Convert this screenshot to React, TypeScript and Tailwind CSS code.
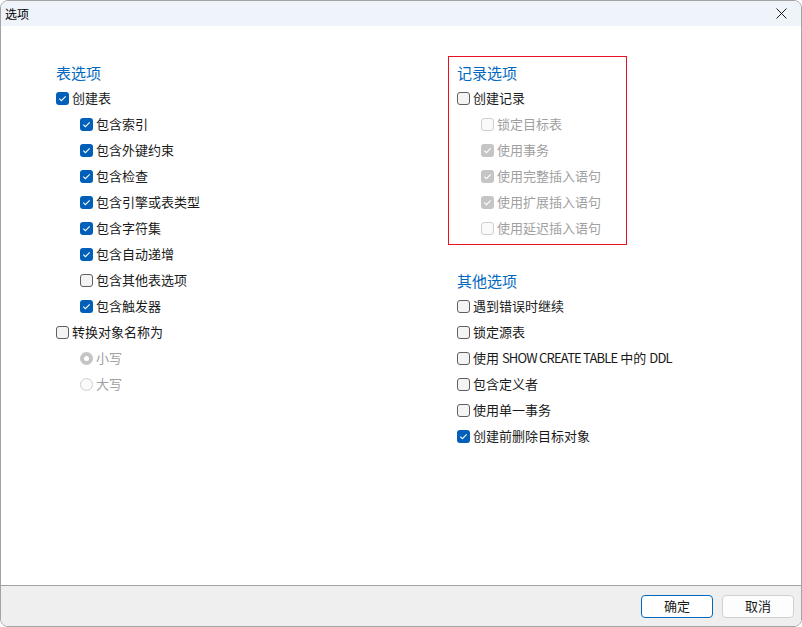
import React from "react";

type Item = {
  label: React.ReactNode;
  key: string;
  checked?: boolean;
  disabled?: boolean;
  indent?: boolean;
  radio?: boolean;
};

const mk = (label: string, opts: Partial<Item> = {}): Item => ({ label, key: label, ...opts });

const tableOptions: Item[] = [
  mk("创建表", { checked: true }),
  mk("包含索引", { checked: true, indent: true }),
  mk("包含外键约束", { checked: true, indent: true }),
  mk("包含检查", { checked: true, indent: true }),
  mk("包含引擎或表类型", { checked: true, indent: true }),
  mk("包含字符集", { checked: true, indent: true }),
  mk("包含自动递增", { checked: true, indent: true }),
  mk("包含其他表选项", { indent: true }),
  mk("包含触发器", { checked: true, indent: true }),
  mk("转换对象名称为"),
  mk("小写", { radio: true, checked: true, disabled: true, indent: true }),
  mk("大写", { radio: true, disabled: true, indent: true }),
];

const recordOptions: Item[] = [
  mk("创建记录"),
  mk("锁定目标表", { disabled: true, indent: true }),
  mk("使用事务", { checked: true, disabled: true, indent: true }),
  mk("使用完整插入语句", { checked: true, disabled: true, indent: true }),
  mk("使用扩展插入语句", { checked: true, disabled: true, indent: true }),
  mk("使用延迟插入语句", { disabled: true, indent: true }),
];

const otherOptions: Item[] = [
  mk("遇到错误时继续"),
  mk("锁定源表"),
  {
    key: "ddl",
    label: (
      <>
        使用 <span className="tracking-[-0.8px]">SHOW CREATE TABLE</span> 中的{" "}
        <span className="tracking-[-0.8px]">DDL</span>
      </>
    ),
  },
  mk("包含定义者"),
  mk("使用单一事务"),
  mk("创建前删除目标对象", { checked: true }),
];

function CheckBox({ checked, disabled }: { checked?: boolean; disabled?: boolean }) {
  if (checked) {
    return (
      <span
        className={
          "flex h-[13px] w-[13px] shrink-0 items-center justify-center rounded-[3px] " +
          (disabled ? "bg-[#c5c5c5]" : "bg-[#005fb8]")
        }
      >
        <svg width="13" height="13" viewBox="0 0 13 13">
          <path d="M3.3 6.7 L5.4 8.7 L9.7 4.4" fill="none" stroke="white" strokeWidth="1.1" />
        </svg>
      </span>
    );
  }
  return (
    <span
      className={
        "h-[13px] w-[13px] shrink-0 rounded-[3px] border " +
        (disabled ? "border-[#cfcfcf] bg-[#fafafa]" : "border-[#5f5f5f] bg-[#f4f4f4]")
      }
    />
  );
}

function Radio({ checked }: { checked?: boolean }) {
  if (checked) {
    return (
      <span className="flex h-[13px] w-[13px] shrink-0 items-center justify-center rounded-full bg-[#c5c5c5]">
        <span className="h-[5px] w-[5px] rounded-full bg-white" />
      </span>
    );
  }
  return <span className="h-[13px] w-[13px] shrink-0 rounded-full border border-[#cfcfcf] bg-[#fafafa]" />;
}

function Row({ item }: { item: Item }) {
  return (
    <div className={"flex h-[26px] items-center gap-[3px] " + (item.indent ? "ml-[24px]" : "")}>
      {item.radio ? <Radio checked={item.checked} /> : <CheckBox checked={item.checked} disabled={item.disabled} />}
      <span className={item.disabled ? "text-[#a0a0a0]" : "text-[#1a1a1a]"}>{item.label}</span>
    </div>
  );
}

function Heading({ children }: { children: React.ReactNode }) {
  return <div className="mb-[2px] h-[20px] text-[15px] leading-[20px] text-[#0067c0]">{children}</div>;
}

export default function App() {
  return (
    <div
      className="flex h-[627px] w-[802px] flex-col overflow-hidden rounded-lg border border-[#a3a3a3] bg-white text-[13px]"
      style={{ fontFamily: "'Noto Sans CJK SC', 'Noto Sans', sans-serif" }}
    >
      <div className="flex h-[25px] shrink-0 items-center justify-between bg-[#eff3fa] pl-[4px] pr-[14px]">
        <span className="text-[12px] text-black">选项</span>
        <svg width="11" height="11" viewBox="0 0 11 11">
          <path d="M0.5 0.5 L10.5 10.5 M10.5 0.5 L0.5 10.5" stroke="#1a1a1a" strokeWidth="1" />
        </svg>
      </div>

      <div className="flex flex-1 pl-[46px] pt-[30px]">
        <div className="w-[401px] border border-transparent px-2 pt-[6px]">
          <Heading>表选项</Heading>
          {tableOptions.map((it) => (
            <Row key={it.key} item={it} />
          ))}
        </div>
        <div className="w-[179px]">
          <div className="border border-[#e81123] px-2 pb-[3px] pt-[6px]">
            <Heading>记录选项</Heading>
            {recordOptions.map((it) => (
              <Row key={it.key} item={it} />
            ))}
          </div>
          <div className="mt-[26px] pl-[9px]">
            <Heading>其他选项</Heading>
            <div className="w-[300px]">
              {otherOptions.map((it) => (
                <Row key={it.key} item={it} />
              ))}
            </div>
          </div>
        </div>
      </div>

      <div className="flex h-[41px] shrink-0 items-center justify-end gap-[9px] border-t border-[#a3a3a3] bg-[#efefef] pr-[7px]">
        <button className="h-[23px] w-[72px] rounded-[4px] border border-[#0067c0] bg-white text-[13px] text-[#1a1a1a]">
          确定
        </button>
        <button className="h-[23px] w-[72px] rounded-[4px] border border-[#d0d0d0] bg-[#fdfdfd] text-[13px] text-[#1a1a1a]">
          取消
        </button>
      </div>
    </div>
  );
}
